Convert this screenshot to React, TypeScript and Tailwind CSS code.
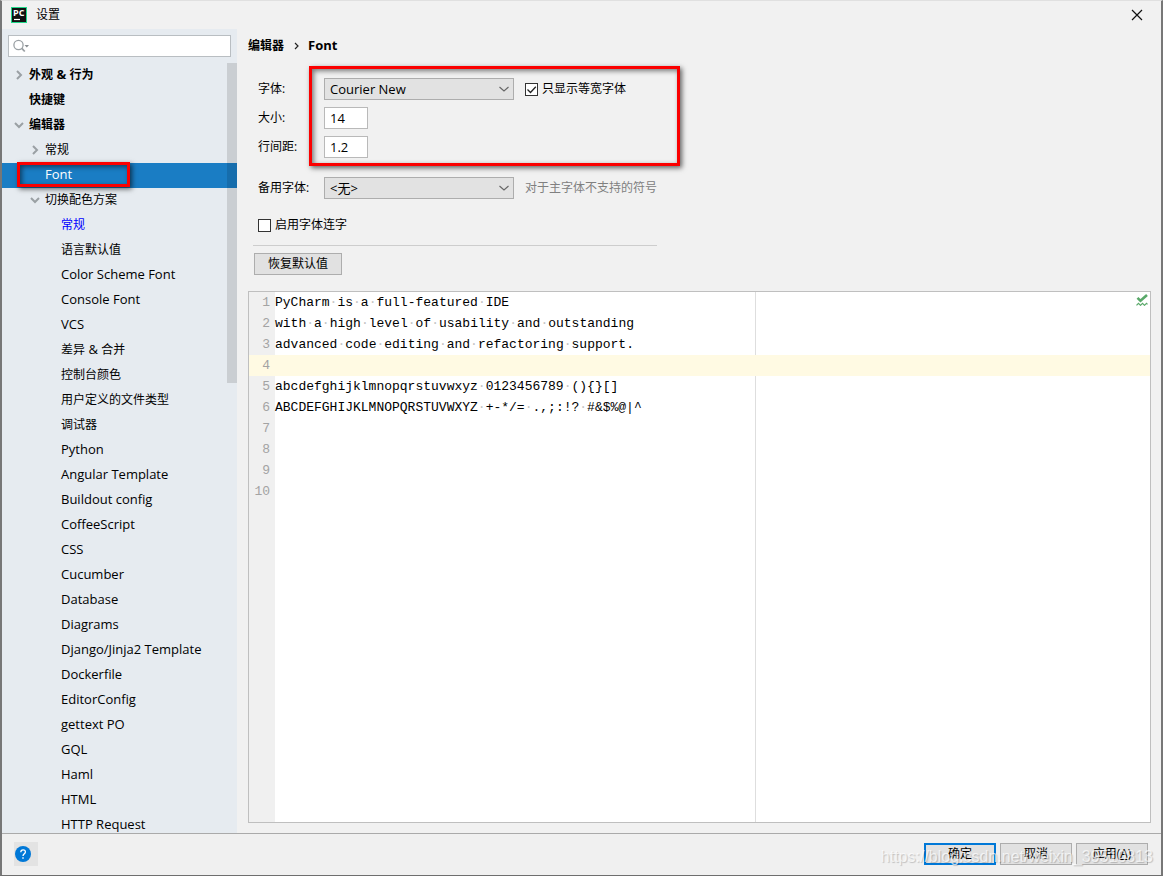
import type { ReactNode } from "react";

type Node = { label: string; depth: number; open?: boolean; bold?: boolean; selected?: boolean; link?: boolean };

const nodes: Node[] = [
  { label: "外观 & 行为", depth: 0, open: false, bold: true },
  { label: "快捷键", depth: 0, bold: true },
  { label: "编辑器", depth: 0, open: true, bold: true },
  { label: "常规", depth: 1, open: false },
  { label: "Font", depth: 1, selected: true },
  { label: "切换配色方案", depth: 1, open: true },
  { label: "常规", depth: 2, link: true },
  ...[
    "语言默认值", "Color Scheme Font", "Console Font", "VCS", "差异 & 合并", "控制台颜色",
    "用户定义的文件类型", "调试器", "Python", "Angular Template", "Buildout config", "CoffeeScript",
    "CSS", "Cucumber", "Database", "Diagrams", "Django/Jinja2 Template", "Dockerfile",
    "EditorConfig", "gettext PO", "GQL", "Haml", "HTML", "HTTP Request",
  ].map((label) => ({ label, depth: 2 })),
];

const codeLines = [
  "PyCharm is a full-featured IDE",
  "with a high level of usability and outstanding",
  "advanced code editing and refactoring support.",
  "",
  "abcdefghijklmnopqrstuvwxyz 0123456789 (){}[]",
  "ABCDEFGHIJKLMNOPQRSTUVWXYZ +-*/= .,;:!? #&$%@|^",
  "",
  "",
  "",
  "",
];

const indents = ["pl-[11px]", "pl-[27px]", "pl-[43px]"];

/* Latin runs are set one pixel larger than the Chinese text around them. */
function Mixed({ text }: { text: string }) {
  return (
    <span className="whitespace-pre">
      {text.split(/([\x20-\x7e]+)/).map((part, i) =>
        i % 2 ? <span key={i} className="text-[13px]">{part}</span> : part,
      )}
    </span>
  );
}

function Arrow({ open }: { open?: boolean }) {
  if (open === undefined) return <span className="w-4 shrink-0" />;
  return (
    <svg className="mr-1 size-3 shrink-0" viewBox="0 0 12 12" fill="none" stroke="#9aa0a4" strokeWidth="2">
      <path d={open ? "M2 4l4 4 4-4" : "M4 2l4 4-4 4"} />
    </svg>
  );
}

function Combo({ id, value }: { id: string; value: string }) {
  return (
    <div className="relative w-[190px]">
      <select
        id={id}
        defaultValue={value}
        className="h-[22px] w-full appearance-none border border-[#adadad] bg-[#e2e2e2] pr-6 pl-[5px] text-[13px] leading-5 outline-none"
      >
        <option>{value}</option>
      </select>
      <svg className="pointer-events-none absolute top-1.5 right-1 h-2.5 w-3" viewBox="0 0 12 10" fill="none" stroke="#666" strokeWidth="1.1">
        <path d="M1.5 3l4.5 4 4.500-4" />
      </svg>
    </div>
  );
}

function Tick({ label, checked }: { label: string; checked?: boolean }) {
  return (
    <label className="relative flex items-center gap-1">
      <input type="checkbox" defaultChecked={checked} className="size-[13px] appearance-none border border-[#333] bg-white" />
      {checked && (
        <svg className="pointer-events-none absolute left-0 size-[13px]" viewBox="0 0 13 13" fill="none" stroke="#222" strokeWidth="1.3">
          <path d="M2.500 6.500l3 3L10.800 3.700" />
        </svg>
      )}
      {label}
    </label>
  );
}

function PushButton({ children, primary }: { children: ReactNode; primary?: boolean }) {
  return (
    <button className={`h-[22px] w-[72px] bg-[#e1e1e1] leading-[18px] ${primary ? "border-2 border-[#0078d7]" : "border border-[#adadad]"}`}>
      {children}
    </button>
  );
}

const redFrame =
  "pointer-events-none absolute border-3 border-[#fb0000] shadow-[2px_2px_5px_rgba(0,0,0,0.6),inset_2px_2px_5px_rgba(0,0,0,0.5)]";

export default function App() {
  return (
    <div className="relative flex h-screen flex-col overflow-hidden border-t border-r-2 border-b border-l-2 border-t-[#e0e0e0] border-r-[#777] border-b-[#6e6e6e] border-l-[#777] bg-[#f1f1f1] font-['Open_Sans','Noto_Sans_CJK_SC',sans-serif] text-xs text-black">
      <header className="flex h-7 shrink-0 items-center pr-[18px] pl-[9px]">
        <svg className="size-4" viewBox="0 0 16 16">
          <rect width="16" height="16" fill="#21d789" />
          <rect x="1" y="1" width="14" height="14" fill="#111" />
          <path d="M3 12.500h6" stroke="#fff" strokeWidth="1.2" />
          <text x="2" y="9" fill="#fff" fontSize="9" fontWeight="700" fontFamily="Open Sans">PC</text>
        </svg>
        <h1 className="ml-[9px]">设置</h1>
        <button aria-label="关闭" className="ml-auto">
          <svg className="size-3" viewBox="0 0 12 12" stroke="#111" strokeWidth="1.2">
            <path d="M1 1l10 10M11 1L1 11" />
          </svg>
        </button>
      </header>

      <div className="flex min-h-0 flex-1">
        <aside className="relative flex w-[235px] shrink-0 flex-col bg-[#e6ebf0]">
          <div className="relative m-1.5 shrink-0">
            <input aria-label="搜索" className="block h-[22px] w-full border border-[#b9bec2] bg-white pl-6 outline-none" />
            <svg className="pointer-events-none absolute top-1 left-1 h-3.5 w-[18px]" viewBox="0 0 18 14" fill="none" stroke="#9aa0a4" strokeWidth="1.3">
              <circle cx="6.5" cy="6" r="4.6" />
              <path d="M9.8 9.3l3 3.2" strokeWidth="1.8" />
              <path d="M12.500 6h4.500l-2.200 2.400z" fill="#8a8f93" stroke="none" />
            </svg>
          </div>
          <ul className="min-h-0 flex-1 overflow-hidden">
            {nodes.map((n, i) => (
              <li
                key={i}
                className={`relative flex h-[25px] items-center pb-0.5 ${indents[n.depth]} ${n.bold ? "font-bold" : ""} ${n.selected ? "bg-[#1a7dc4] text-white" : ""} ${n.link ? "text-[#0000ff]" : ""}`}
              >
                <Arrow open={n.open} />
                <Mixed text={n.label} />
                {n.selected && <span className={`${redFrame} -top-px left-[15px] h-[25px] w-[113px]`} />}
              </li>
            ))}
          </ul>
          <div className="pointer-events-none absolute top-[34px] right-0 h-80 w-2.5 bg-black/12" />
        </aside>

        <main className="flex min-w-0 flex-1 flex-col pr-[10px] pb-2.5 pl-[11px]">
          <nav className="flex h-[33px] shrink-0 items-center gap-2.5 font-bold">
            <span>编辑器</span>
            <svg className="h-2 w-1.5" viewBox="0 0 6 8" fill="none" stroke="#222" strokeWidth="1.2">
              <path d="M1 1l3 3-3 3" />
            </svg>
            <span className="-ml-0.5 text-[13px]">Font</span>
          </nav>

          <form className="relative shrink-0 pt-4 pl-[5px]">
            <div className="grid grid-cols-[66px_190px_auto] items-center justify-start gap-y-[7px] pl-[5px]">
              <label htmlFor="font">字体:</label>
              <Combo id="font" value="Courier New" />
              <div className="pl-[11px]"><Tick label="只显示等宽字体" checked /></div>
              <label htmlFor="size">大小:</label>
              <input id="size" defaultValue="14" className="col-span-2 h-[22px] w-11 border border-[#b9b9b9] bg-white pl-[5px] text-[13px]" />
              <label htmlFor="spacing">行间距:</label>
              <input id="spacing" defaultValue="1.2" className="col-span-2 h-[22px] w-11 border border-[#b9b9b9] bg-white pl-[5px] text-[13px]" />
              <label htmlFor="fallback" className="mt-3">备用字体:</label>
              <div className="mt-3"><Combo id="fallback" value="<无>" /></div>
              <span className="mt-3 pl-[11px] text-[#808080]">对于主字体不支持的符号</span>
            </div>
            <div className="mt-[18px] pl-[5px]"><Tick label="启用字体连字" /></div>
            <hr className="mt-3 w-[404px] border-[#cdcdcd]" />
            <button type="button" className="mt-[7px] ml-px h-[22px] w-[88px] border border-[#adadad] bg-[#e1e1e1] leading-[18px]">恢复默认值</button>
            <span className={`${redFrame} top-1 left-[61px] h-[100px] w-[371px]`} />
          </form>

          <section className="relative mt-4 flex min-h-0 flex-1 flex-col border border-[#bfbfbf] bg-[linear-gradient(to_right,#f0f0f0_26px,#fff_26px,#fff_506px,#dedede_506px,#dedede_507px,#fff_507px)] font-['Liberation_Mono',monospace] text-[13px]">
            {codeLines.map((line, i) => (
              <div key={i} className={`flex h-[21px] items-center ${i === 3 ? "bg-[#fffae3]" : ""}`}>
                <span className="w-[26px] shrink-0 pr-[5px] text-right text-[#a3a3a3]">{i + 1}</span>
                <code className="font-['Liberation_Mono',monospace] whitespace-pre">
                  {line.split(" ").map((word, w) => (
                    <span key={w}>
                      {w > 0 && <span className="text-[#c4c4c4]">·</span>}
                      {word}
                    </span>
                  ))}
                </code>
              </div>
            ))}
            <svg className="absolute top-0.5 right-0.5 h-3 w-3" viewBox="0 0 12 12" fill="none" stroke="#59a869">
              <path d="M1.500 3.800l3 3L11 1" strokeWidth="2.6" />
              <path d="M.5 11.300l2-2 2 2 2-2 2 2 2-2 1 1" strokeWidth="1.2" />
            </svg>
          </section>
        </main>
      </div>

      <footer className="flex h-[42px] shrink-0 items-center gap-1 border-t border-[#aaa] bg-[#f0f0f0] pr-[13px] pb-px pl-3">
        <button aria-label="帮助" className="mr-auto flex size-6 items-center bg-[#e3e3e3] pl-px">
          <svg className="size-4" viewBox="0 0 16 16" fill="none" stroke="#fff">
            <circle cx="8" cy="8" r="8" fill="#0078d7" stroke="none" />
            <path d="M5.800 6.200c0-3.200 4.600-3 4.600-.3C10.400 7.700 8 7.700 8 10" strokeWidth="1.3" />
            <path d="M8 11.300v1.400" strokeWidth="1.4" />
          </svg>
        </button>
        <PushButton primary>确定</PushButton>
        <PushButton>取消</PushButton>
        <PushButton>应用(<u>A</u>)</PushButton>
      </footer>
      <div className="pointer-events-none absolute right-2 bottom-2 font-['Liberation_Sans',sans-serif] text-base leading-5 text-white/70 [text-shadow:1px_1px_1px_rgba(0,0,0,0.2)]">
        https://blog.csdn.net/weixin_39510813
      </div>
    </div>
  );
}
